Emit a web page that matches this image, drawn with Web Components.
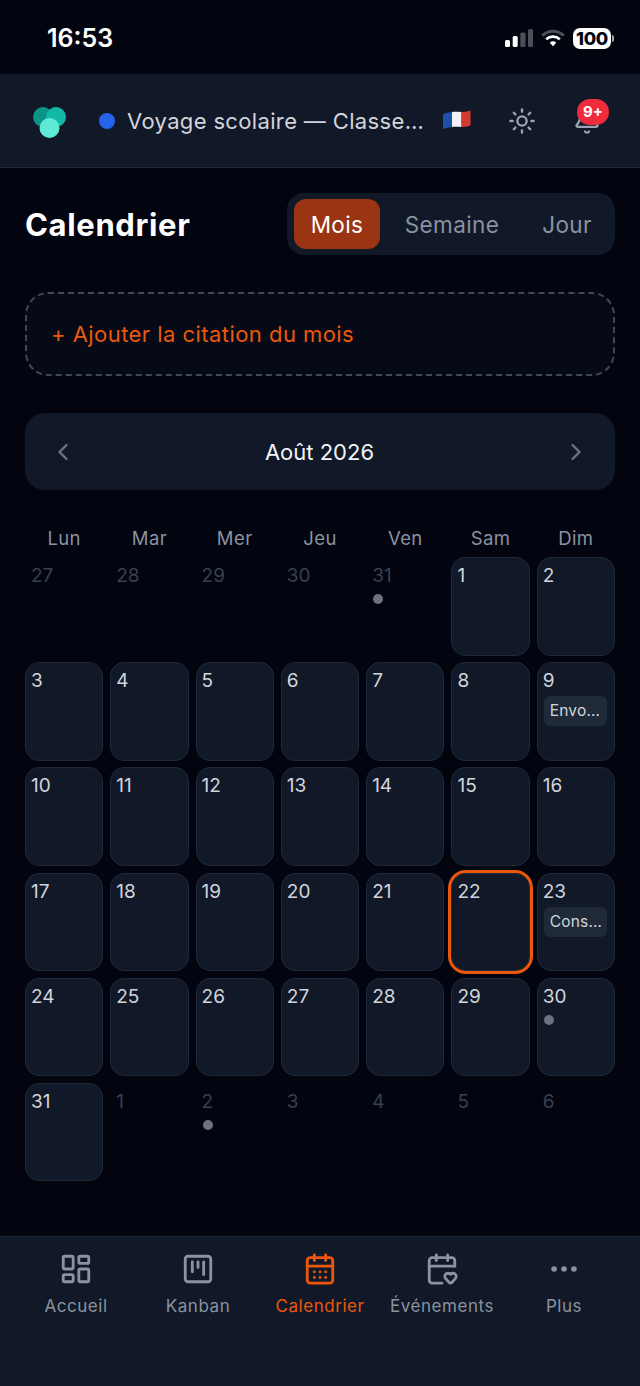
<!DOCTYPE html>
<html lang="fr">
<head>
<meta charset="utf-8">
<title>Calendrier</title>
<style>
    html, body { margin: 0; padding: 0; background: #02040f; }
    body {
        width: 640px;
        height: 1386px;
        display: flex;
        flex-direction: column;
        overflow: hidden;
        font-family: "Inter", "Liberation Sans", sans-serif;
    }
</style>
</head>
<body>
<status-bar></status-bar>
<app-header>Voyage scolaire — Classe de 5e</app-header>
<main-view>
    <page-title></page-title>
    <quote-add>+ Ajouter la citation du mois</quote-add>
    <month-nav>Août 2026</month-nav>
    <cal-month>
        <cal-day muted>27</cal-day><cal-day muted>28</cal-day><cal-day muted>29</cal-day><cal-day muted>30</cal-day><cal-day muted dot>31</cal-day><cal-day>1</cal-day><cal-day>2</cal-day>
        <cal-day>3</cal-day><cal-day>4</cal-day><cal-day>5</cal-day><cal-day>6</cal-day><cal-day>7</cal-day><cal-day>8</cal-day><cal-day chip="Envo…">9</cal-day>
        <cal-day>10</cal-day><cal-day>11</cal-day><cal-day>12</cal-day><cal-day>13</cal-day><cal-day>14</cal-day><cal-day>15</cal-day><cal-day>16</cal-day>
        <cal-day>17</cal-day><cal-day>18</cal-day><cal-day>19</cal-day><cal-day>20</cal-day><cal-day>21</cal-day><cal-day today>22</cal-day><cal-day chip="Cons…">23</cal-day>
        <cal-day>24</cal-day><cal-day>25</cal-day><cal-day>26</cal-day><cal-day>27</cal-day><cal-day>28</cal-day><cal-day>29</cal-day><cal-day dot>30</cal-day>
        <cal-day>31</cal-day><cal-day muted>1</cal-day><cal-day muted dot>2</cal-day><cal-day muted>3</cal-day><cal-day muted>4</cal-day><cal-day muted>5</cal-day><cal-day muted>6</cal-day>
    </cal-month>
</main-view>
<bottom-nav></bottom-nav>

<script>
const ICONS = {
    accueil: '<rect x="3" y="3" width="7" height="9" rx="1"/><rect x="14" y="3" width="7" height="5" rx="1"/><rect x="14" y="12" width="7" height="9" rx="1"/><rect x="3" y="16" width="7" height="5" rx="1"/>',
    kanban: '<rect x="3" y="3" width="18" height="18" rx="2"/><path d="M8 7v7"/><path d="M12 7v4"/><path d="M16 7v9"/>',
    calendrier: '<path d="M8 2v4"/><path d="M16 2v4"/><rect x="3" y="4" width="18" height="18" rx="2"/><path d="M3 10h18"/><path d="M8 14h.01"/><path d="M12 14h.01"/><path d="M16 14h.01"/><path d="M8 18h.01"/><path d="M12 18h.01"/><path d="M16 18h.01"/>',
    evenements: '<path d="M3 10h18"/><path d="M8 2v4"/><path d="M16 2v4"/><path d="M21 10V6a2 2 0 0 0-2-2H5a2 2 0 0 0-2 2v14a2 2 0 0 0 2 2h7"/><path d="M14.62 18.8A2.25 2.25 0 1 1 18 15.836a2.25 2.25 0 1 1 3.38 2.966l-2.626 2.856a.998.998 0 0 1-1.507 0z"/>',
    plus: '<circle cx="12" cy="12" r="1"/><circle cx="19" cy="12" r="1"/><circle cx="5" cy="12" r="1"/>'
};

class StatusBar extends HTMLElement {
    connectedCallback() {
        this.attachShadow({ mode: 'open' }).innerHTML = `
            <style>
                :host {
                    display: flex;
                    flex: none;
                    height: 74px;
                    box-sizing: border-box;
                    padding: 0 26px 0 47px;
                    align-items: center;
                    justify-content: space-between;
                    color: #fff;
                }
                .time { font: 600 25px/1 "Inter", sans-serif; margin-top: 3px; }
                .right { display: flex; align-items: center; gap: 8px; margin-top: 2px; }
                .batt { display: flex; align-items: center; gap: 1px; }
                .batt b {
                    display: block;
                    width: 38px;
                    height: 21px;
                    border-radius: 7px;
                    background: #fff;
                    color: #02040f;
                    font: 800 18px/21px "Inter", sans-serif;
                    text-align: center;
                    letter-spacing: -0.3px;
                }
                .batt i { display: block; width: 2px; height: 7px; background: #9ca3af; border-radius: 0 2px 2px 0; }
            </style>
            <span class="time">16:53</span>
            <div class="right">
                <svg width="28" height="18" viewBox="0 0 28 18">
                    <rect x="0" y="11" width="5" height="7" rx="1.500" fill="#fff"/>
                    <rect x="7.700" y="7" width="5" height="11" rx="1.500" fill="#fff"/>
                    <rect x="15.300" y="3.500" width="5.200" height="14.500" rx="1.500" fill="#4b5058"/>
                    <rect x="23" y="0" width="5" height="18" rx="1.500" fill="#4b5058"/>
                </svg>
                <svg width="24" height="18" viewBox="0 0 24 18" fill="none">
                    <path d="M1.300 6.600a15.500 15.500 0 0 1 21.400 0" stroke="#4b5058" stroke-width="3"/>
                    <path d="M5.200 10.300a10 10 0 0 1 13.600 0" stroke="#fff" stroke-width="2.800"/>
                    <path d="M8.800 13.800a4.800 4.800 0 0 1 6.400 0L12 17.200z" fill="#fff"/>
                </svg>
                <div class="batt"><b>100</b><i></i></div>
            </div>
        `;
    }
}

class AppHeader extends HTMLElement {
    connectedCallback() {
        this.attachShadow({ mode: 'open' }).innerHTML = `
            <style>
                :host {
                    display: flex;
                    flex: none;
                    height: 94px;
                    box-sizing: border-box;
                    align-items: center;
                    background: #111827;
                    border-bottom: 1px solid #1f2937;
                    padding: 0 20px 0 33px;
                }
                .logo { flex: none; width: 33px; height: 31px; margin: 3px 33px 0 0; }
                .dot { flex: none; width: 16px; height: 16px; border-radius: 50%; background: #2563eb; margin-right: 12px; }
                .name {
                    width: 298px;
                    flex: none;
                    white-space: nowrap;
                    overflow: hidden;
                    text-overflow: ellipsis;
                    font-size: 22px;
                    letter-spacing: 0.35px;
                    color: #d1d5db;
                }
                .flag { flex: none; width: 29px; height: 22px; margin: -2px 0 0 17px; }
                .sun { flex: none; width: 28px; height: 28px; margin-left: 37px; color: #9ca3af; }
                .bell-wrap { flex: none; position: relative; width: 28px; height: 28px; margin-left: 37px; color: #9ca3af; }
                .bell-wrap svg { display: block; width: 28px; height: 28px; }
                .badge {
                    position: absolute;
                    left: 4px;
                    top: -8px;
                    width: 32px;
                    height: 26px;
                    border-radius: 13px;
                    background: #ef2b3d;
                    color: #fff;
                    font: 700 15px/26px "Inter", sans-serif;
                    text-align: center;
                }
            </style>
            <svg class="logo" viewBox="0 0 33 31">
                <circle cx="10" cy="10" r="10" fill="#0d9488"/>
                <circle cx="23" cy="10" r="10" fill="#14b8a6"/>
                <circle cx="16.500" cy="21" r="10" fill="#5eead4"/>
            </svg>
            <span class="dot"></span>
            <span class="name"><slot></slot></span>
            <svg class="flag" viewBox="0 0 29 22">
                <path d="M1 5c3-1 6-1.500 9-2v15c-3 .5-6 1-9 2z" fill="#1f4fa8"/>
                <path d="M10 3c3-.5 6 0 9.500 0v15c-3.500 0-6.500-.5-9.500 0z" fill="#f0f0f5"/>
                <path d="M19.500 3c3 0 6-.5 9-1.500v15c-3 1-6 1.500-9 1.500z" fill="#d33b30"/>
            </svg>
            <svg class="sun" viewBox="0 0 24 24" fill="none" stroke="currentColor" stroke-width="2" stroke-linecap="round" stroke-linejoin="round">
                <circle cx="12" cy="12" r="4"/><path d="M12 2v2"/><path d="M12 20v2"/><path d="m4.930 4.930 1.410 1.410"/><path d="m17.660 17.660 1.410 1.410"/><path d="M2 12h2"/><path d="M20 12h2"/><path d="m6.340 17.660-1.410 1.410"/><path d="m19.070 4.930-1.410 1.410"/>
            </svg>
            <div class="bell-wrap">
                <svg viewBox="0 0 24 24" fill="none" stroke="currentColor" stroke-width="2" stroke-linecap="round" stroke-linejoin="round">
                    <path d="M10.268 21a2 2 0 0 0 3.464 0"/>
                    <path d="M3.262 15.326A1 1 0 0 0 4 17h16a1 1 0 0 0 .74-1.673C19.410 13.956 18 12.499 18 8A6 6 0 0 0 6 8c0 4.499-1.411 5.956-2.738 7.326"/>
                </svg>
                <span class="badge">9+</span>
            </div>
        `;
    }
}

class MainView extends HTMLElement {
    connectedCallback() {
        this.attachShadow({ mode: 'open' }).innerHTML = `
            <style>
                :host {
                    display: flex;
                    flex-direction: column;
                    flex: 1;
                    min-height: 0;
                    padding: 25px 25px 0;
                }
            </style>
            <slot></slot>
        `;
    }
}

class PageTitle extends HTMLElement {
    connectedCallback() {
        this.attachShadow({ mode: 'open' }).innerHTML = `
            <style>
                :host { display: flex; align-items: center; justify-content: space-between; height: 62px; }
                h1 { margin: 0; font-size: 31px; font-weight: 700; letter-spacing: 0.65px; color: #fff; }
                .tabs {
                    display: flex;
                    align-items: center;
                    box-sizing: border-box;
                    width: 328px;
                    height: 62px;
                    padding: 6px 7px;
                    border-radius: 17px;
                    background: #111827;
                }
                .tabs span {
                    display: flex;
                    align-items: center;
                    justify-content: center;
                    height: 50px;
                    border-radius: 12px;
                    font-size: 22.5px;
                    letter-spacing: 0.4px;
                    color: #8b92a0;
                }
                .tabs .on { width: 86px; background: #9a3412; color: #fff; }
                .tabs .wk { width: 144px; }
                .tabs .dy { width: 76px; margin-left: 5px; }
            </style>
            <h1>Calendrier</h1>
            <div class="tabs">
                <span class="on">Mois</span>
                <span class="wk">Semaine</span>
                <span class="dy">Jour</span>
            </div>
        `;
    }
}

class QuoteAdd extends HTMLElement {
    connectedCallback() {
        this.attachShadow({ mode: 'open' }).innerHTML = `
            <style>
                :host {
                    display: flex;
                    align-items: center;
                    box-sizing: border-box;
                    height: 84px;
                    margin-top: 37px;
                    padding-left: 24px;
                    border: 2px dashed #3f4856;
                    border-radius: 23px;
                    background: #060a17;
                    color: #ea580c;
                    font-size: 22px;
                    letter-spacing: 0.45px;
                }
            </style>
            <slot></slot>
        `;
    }
}

class MonthNav extends HTMLElement {
    connectedCallback() {
        this.attachShadow({ mode: 'open' }).innerHTML = `
            <style>
                :host {
                    display: flex;
                    align-items: center;
                    justify-content: space-between;
                    box-sizing: border-box;
                    height: 77px;
                    margin-top: 37px;
                    padding: 0 25px 0 24px;
                    border-radius: 20px;
                    background: #111827;
                    color: #f3f4f6;
                    font-size: 22px;
                }
                svg { width: 28px; height: 28px; color: #6b7280; }
            </style>
            <svg viewBox="0 0 24 24" fill="none" stroke="currentColor" stroke-width="2" stroke-linecap="round" stroke-linejoin="round"><path d="m15 18-6-6 6-6"/></svg>
            <span><slot></slot></span>
            <svg viewBox="0 0 24 24" fill="none" stroke="currentColor" stroke-width="2" stroke-linecap="round" stroke-linejoin="round"><path d="m9 18 6-6-6-6"/></svg>
        `;
    }
}

class CalMonth extends HTMLElement {
    connectedCallback() {
        const heads = ['Lun', 'Mar', 'Mer', 'Jeu', 'Ven', 'Sam', 'Dim'];
        this.attachShadow({ mode: 'open' }).innerHTML = `
            <style>
                :host { display: block; margin-top: 35px; }
                .heads, .days { display: grid; grid-template-columns: repeat(7, 1fr); column-gap: 7px; }
                .heads { height: 26px; align-items: center; margin-bottom: 6px; }
                .heads span { text-align: center; font-size: 18.5px; letter-spacing: 0.4px; color: #8b92a0; }
                .days { grid-auto-rows: 98.5px; row-gap: 6.7px; }
            </style>
            <div class="heads">${heads.map(h => `<span>${h}</span>`).join('')}</div>
            <div class="days"><slot></slot></div>
        `;
    }
}

class CalDay extends HTMLElement {
    connectedCallback() {
        const chip = this.getAttribute('chip');
        this.attachShadow({ mode: 'open' }).innerHTML = `
            <style>
                :host {
                    display: block;
                    box-sizing: border-box;
                    padding: 6px 7px 6px 6px;
                    border: 1px solid #1f2937;
                    border-radius: 14px;
                    background: #111827;
                    color: #d1d5db;
                    font-size: 19px;
                }
                :host([muted]) { background: transparent; border-color: transparent; color: #374151; }
                :host([today]) { outline: 3px solid #ea580c; outline-offset: 0; border-color: #1f2937; border-radius: 15px; }
                .n { display: block; height: 23px; line-height: 23px; margin-left: -1px; }
                .dot { width: 10px; height: 10px; margin: 7px 0 0 0; border-radius: 50%; background: #6b7280; }
                .chip {
                    margin-top: 4px;
                    height: 30px;
                    border-radius: 6px;
                    background: #1f2937;
                    padding-left: 6px;
                    font-size: 15.5px;
                    letter-spacing: 0.2px;
                    line-height: 30px;
                    color: #d1d5db;
                    overflow: hidden;
                    white-space: nowrap;
                }
            </style>
            <span class="n"><slot></slot></span>
            ${this.hasAttribute('dot') ? '<div class="dot"></div>' : ''}
            ${chip ? `<div class="chip">${chip}</div>` : ''}
        `;
    }
}

class BottomNav extends HTMLElement {
    connectedCallback() {
        const items = [
            ['accueil', 'Accueil'],
            ['kanban', 'Kanban'],
            ['calendrier', 'Calendrier'],
            ['evenements', 'Événements'],
            ['plus', 'Plus']
        ];
        this.attachShadow({ mode: 'open' }).innerHTML = `
            <style>
                :host {
                    display: grid;
                    grid-template-columns: repeat(5, 1fr);
                    flex: none;
                    box-sizing: border-box;
                    height: 150px;
                    padding: 15px 15px 0;
                    background: #111827;
                    border-top: 1px solid #1f2937;
                }
                a { display: flex; flex-direction: column; align-items: center; color: #8b92a0; font-size: 17px; letter-spacing: 0.55px; }
                a.on { color: #ea580c; }
                svg { display: block; width: 34px; height: 34px; margin-bottom: 8px; }
                span { white-space: nowrap; line-height: 24px; }
            </style>
            ${items.map(([id, label]) => `
                <a class="${id === 'calendrier' ? 'on' : ''}">
                    <svg viewBox="0 0 24 24" fill="none" stroke="currentColor" stroke-width="2" stroke-linecap="round" stroke-linejoin="round">${ICONS[id]}</svg>
                    <span>${label}</span>
                </a>`).join('')}
        `;
    }
}

customElements.define('status-bar', StatusBar);
customElements.define('app-header', AppHeader);
customElements.define('main-view', MainView);
customElements.define('page-title', PageTitle);
customElements.define('quote-add', QuoteAdd);
customElements.define('month-nav', MonthNav);
customElements.define('cal-month', CalMonth);
customElements.define('cal-day', CalDay);
customElements.define('bottom-nav', BottomNav);
</script>
</body>
</html>
